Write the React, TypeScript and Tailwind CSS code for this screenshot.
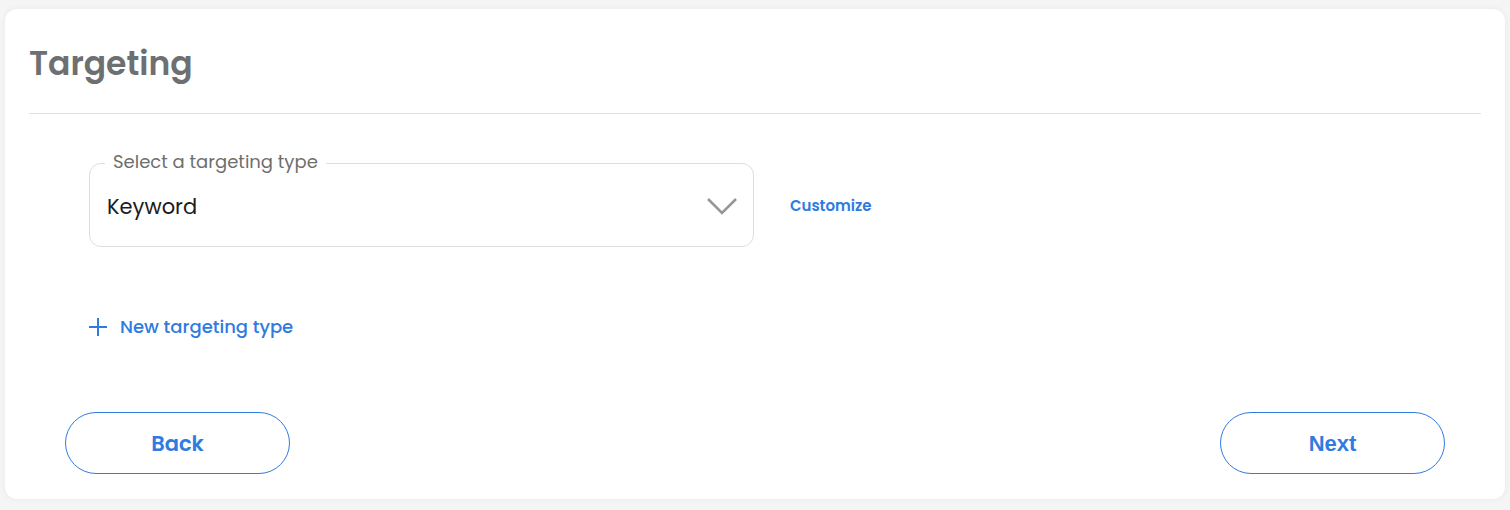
const poppins = { fontFamily: "Poppins, 'Open Sans', 'Noto Sans', sans-serif" };

export default function App() {
  return (
    <div className="w-[1510px] h-[510px] bg-[#f5f5f5] pt-[9px] pl-[5px]" style={poppins}>
      <div className="w-[1500px] h-[490px] bg-white rounded-[12px] shadow-[0_0_6px_rgba(0,0,0,0.06)] px-6 flex flex-col">
        {/* header */}
        <div className="h-[105px] border-b border-[#e0e0e0] flex items-center">
          <h1 className="text-[33px] font-semibold text-[#6d6f71] leading-none mt-[4px]">Targeting</h1>
        </div>

        {/* targeting select */}
        <div className="flex items-center pl-[60px] mt-[49px]">
          <div className="relative w-[665px] h-[84px] border border-[#dedede] rounded-[12px] flex items-center pl-[17px] pr-[16px]">
            <span className="absolute -top-[14px] left-[15px] bg-white px-[8px] text-[18px] leading-[24px] font-normal text-[#6e6e6e]">
              Select a targeting type
            </span>
            <span className="flex-1 text-[21px] text-[#1c1c1c] mt-[4px]">Keyword</span>
            <svg width="32" height="18" viewBox="0 0 32 18" className="-mr-[1px] mt-[2px]">
              <path d="M2 2 L16 16 L30 2" stroke="#939799" strokeWidth="2.6" fill="none" />
            </svg>
          </div>
          <button className="ml-[36px] text-[15px] font-semibold text-[#2f7be0] mt-[2px]">Customize</button>
        </div>

        {/* new targeting type */}
        <div className="pl-[60px] mt-[66px] flex items-center gap-[13px] text-[#2f7be0]">
          <svg width="18" height="18" viewBox="0 0 18 18">
            <path d="M9 0 V18 M0 9 H18" stroke="#2f7be0" strokeWidth="2" fill="none" />
          </svg>
          <span className="text-[18px] font-medium">New targeting type</span>
        </div>

        {/* footer buttons */}
        <div className="flex justify-between px-9 mt-[72px]">
          <button className="w-[225px] h-[62px] rounded-full border border-[#2f7be0] text-[21px] font-semibold text-[#2f7be0] pt-[2px]">
            Back
          </button>
          <button
            className="w-[225px] h-[62px] rounded-full border border-[#2f7be0] text-[22px] font-bold text-[#2f7be0] pt-[1px]"
            style={{ fontFamily: "'Liberation Sans', Arial, sans-serif" }}
          >
            Next
          </button>
        </div>
      </div>
    </div>
  );
}
